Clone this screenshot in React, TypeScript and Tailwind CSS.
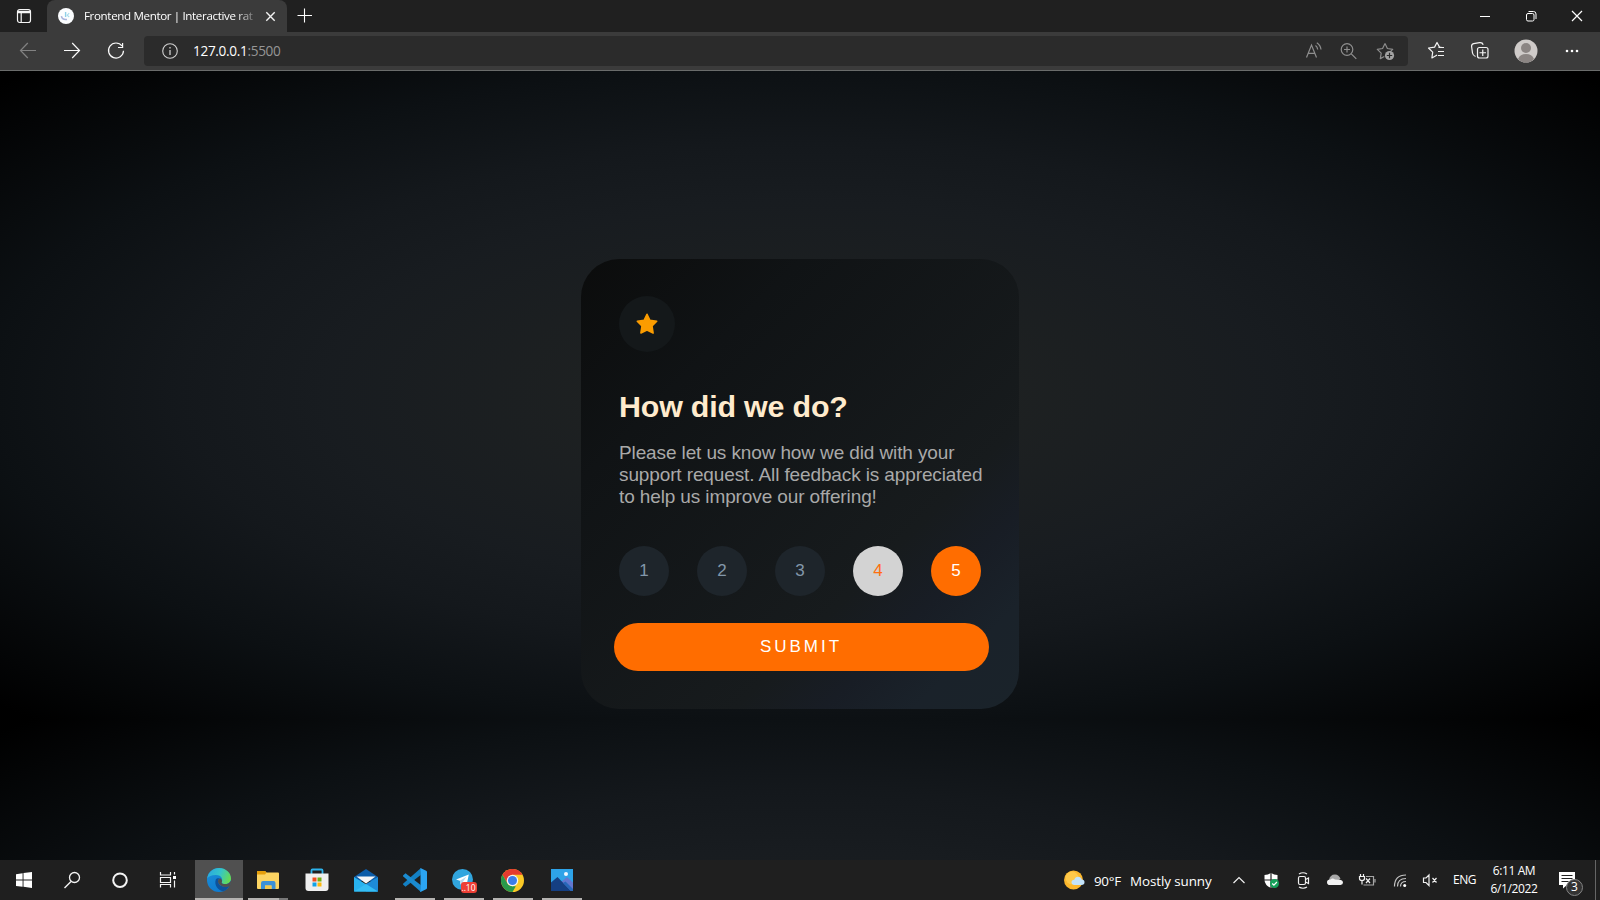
import React from "react";

const ui = "font-['Open_Sans','Noto_Sans',sans-serif]";

function TabBar() {
  return (
    <div className="flex h-8 shrink-0 bg-[#202020]">
      <div className="flex w-[47px] items-center justify-center">
        <svg width="16" height="16" viewBox="0 0 16 16" fill="none" stroke="#f5f5f5">
          <rect x="1.5" y="1.5" width="13" height="13" rx="2.2" strokeWidth="1.2" />
          <path d="M1.5 3.4h13M2 4.5h12" strokeWidth="1.4" />
          <path d="M5.2 4v10" strokeWidth="1.2" />
        </svg>
      </div>
      <div className="flex w-[240px] items-center rounded-t-lg bg-[#3b3b3b] pl-[11px]">
        <svg width="16" height="16" viewBox="0 0 16 16">
          <circle cx="8" cy="8" r="8" fill="#fbfdff" />
          <path d="M3.4 8.2c.5 2.6 2.8 3.6 5.6 3.2" fill="none" stroke="#a9b4dc" strokeWidth="1.5" />
          <path d="M7.6 4v5" stroke="#8fd0e8" strokeWidth="1.4" />
          <path d="M11.2 5.2 9.2 7.2l2 1.8" fill="none" stroke="#a5dcec" strokeWidth="1.1" />
        </svg>
        <div className="ml-[10px] w-[173px] text-[11.6px] leading-4 tracking-[-0.36px] whitespace-nowrap text-white [mask-image:linear-gradient(to_right,#000_152px,transparent_176px)]">
          Frontend Mentor | Interactive rat
        </div>
        <svg className="ml-[8px]" width="11" height="11" viewBox="0 0 11 11" stroke="#f2f2f2" strokeWidth="1.4">
          <path d="m1.3 1.3 8.4 8.4M9.7 1.3 1.3 9.7" />
        </svg>
      </div>
      <svg className="ml-[10px]" width="16" height="32" viewBox="0 0 16 32" stroke="#fff" strokeWidth="1.1">
        <path d="M.5 15.5h14.5M7.5 8.5v14" />
      </svg>
      <div className="ml-auto flex items-center text-white">
        <svg width="46" height="32" viewBox="0 0 46 32" stroke="#fff">
          <path d="M18 16.5h10" />
        </svg>
        <svg width="46" height="32" viewBox="0 0 46 32" stroke="#fff" fill="none">
          <rect x="18.500" y="13.500" width="7.500" height="7.500" rx="1.500" />
          <path d="M20.500 11.500h5q2.500 0 2.500 2.500v5" />
        </svg>
        <svg width="46" height="32" viewBox="0 0 46 32" stroke="#fff" strokeWidth="1.2">
          <path d="m18 11 10 10M28 11 18 21" />
        </svg>
      </div>
    </div>
  );
}

function Toolbar() {
  return (
    <div className="flex h-[39px] shrink-0 items-center border-b border-[#6a6c6b] bg-[#3b3b3b]">
      <svg width="144" height="38" viewBox="0 0 144 38" fill="none" strokeWidth="1.2">
        <path d="M36 18.500H20.500M27.800 11l-7.300 7.500 7.300 7.500" stroke="#828282" />
        <path d="M64 18.500h15.500M72.200 11l7.300 7.500-7.300 7.500" stroke="#fafafa" />
        <path d="M122 14a7.500 7.500 0 1 0 1.500 4.800M122.600 11v4.500H118" stroke="#fafafa" />
      </svg>
      <div className="flex h-[30px] w-[1264px] items-center rounded-[4px] bg-[#2b2b2b]">
        <svg className="ml-[18px]" width="16" height="16" viewBox="0 0 16 16" fill="none" stroke="#d0d0d0">
          <circle cx="8" cy="8" r="7.300" strokeWidth="1.100" />
          <path d="M8 7v5M8 4v1.600" strokeWidth="1.300" />
        </svg>
        <div className="ml-[15px] text-[13.6px] leading-4 tracking-[-0.32px] whitespace-nowrap text-white">
          127.0.0.1<span className="text-[#969696]">:5500</span>
        </div>
        <svg className="ml-auto" width="108" height="30" viewBox="0 0 108 30" fill="none" stroke="#8e8e8e" strokeWidth="1.200">
          <path d="M6.500 21.500 11.500 9l5 12.500M8.200 17.300h6.600" />
          <path d="M15.500 9.500q2 1.500 2.200 4M16.800 6.800q3.700 2.500 4.200 6.700" />
          <circle cx="47" cy="13.500" r="5.800" />
          <path d="m51.300 17.800 5 5M44 13.500h6M47 10.500v6" />
          <path d="m85 7.500 2.400 5 5.300.8-3.800 3.800M85 7.500l-2.400 5-5.300.8 3.900 3.900-.9 5.400 4-2.100" strokeLinejoin="round" />
          <circle cx="89.500" cy="19.500" r="4.600" fill="#a3a3a3" stroke="none" />
          <path d="M86.800 19.500h5.400M89.500 16.800v5.400" stroke="#2b2b2b" />
        </svg>
      </div>
      <svg width="192" height="38" viewBox="0 0 192 38" fill="none" stroke="#f4f4f4" strokeWidth="1.200">
        <g transform="translate(-.5 1)">
          <path d="m34.500 14.500-2.500-.4-2.500-4.600-2.400 4.600-6.100.9 4.200 4.200-.8 5.700 5.200-2.900" strokeLinejoin="round" />
          <path d="M31 14.500h5.500M30.500 18.500h6M30.500 22.500h6" />
        </g>
        <path d="M67.500 24.500q-2.500-.9-3-3.500l-.9-6.500q-.2-2.300 2-2.900l6-.9q2.800-.4 3.600 2" />
        <rect x="69.500" y="15.500" width="10.500" height="10.500" rx="2" />
        <path d="M74.750 17.500v6.500M71.500 20.750h6.500" />
        <g stroke="none">
          <circle cx="118" cy="19" r="11.500" fill="#cfcbc9" />
          <circle cx="118" cy="16" r="5" fill="#8b8583" />
          <path d="M110 27q2-5 8-5t8 5q-3.300 3.500-8 3.500t-8-3.500Z" fill="#8b8583" />
          <circle cx="159" cy="19" r="1.300" fill="#fff" />
          <circle cx="164" cy="19" r="1.300" fill="#fff" />
          <circle cx="169" cy="19" r="1.300" fill="#fff" />
        </g>
      </svg>
    </div>
  );
}

const ratings = [
  { n: 1, style: "bg-[#1e252b] text-[#8297aa]" },
  { n: 2, style: "bg-[#1e252b] text-[#8297aa]" },
  { n: 3, style: "bg-[#1e252b] text-[#8297aa]" },
  { n: 4, style: "bg-[#d3d3d3] text-[#ff6f0f]" },
  { n: 5, style: "bg-[#ff6d00] text-white" },
];

function RatingCard() {
  return (
    <main className="flex h-[450px] w-[438px] flex-col rounded-[38px] bg-[linear-gradient(135deg,#0b0c0c_0%,#101315_25%,#171b1d_68%,#181d25_78%,#1a222a_88%,#1a232a_100%)] pt-[37px] pl-[38px] font-['Liberation_Sans',Arial,sans-serif]">
      <div className="flex size-14 items-center justify-center rounded-full bg-[#14181a]">
        <svg width="22" height="22" viewBox="0 0 22 22" fill="#fb9c00" stroke="#fb9c00" strokeWidth="1.600" strokeLinejoin="round">
          <path d="m11 1.300 2.900 6.100 6.800.8-4.700 4.700 1.100 7.100L11 17l-6.100 3 1.100-7.100-4.700-4.700 6.800-.8Z" />
        </svg>
      </div>
      <h1 className="mt-[37px] text-[30.4px] leading-[35px] font-bold tracking-[-0.19px] text-[#ffebcd]">How did we do?</h1>
      <p className="mt-[18px] w-[380px] text-[19px] leading-[22px] tracking-[-0.12px] whitespace-nowrap text-[#a9a9a9]">
        Please let us know how we did with your
        <br />
        support request. All feedback is appreciated
        <br />
        to help us improve our offering!
      </p>
      <div className="mt-[38px] flex gap-7">
        {ratings.map((r) => (
          <button key={r.n} className={`flex size-[50px] items-center justify-center rounded-full pb-px text-[17px] ${r.style}`}>
            {r.n}
          </button>
        ))}
      </div>
      <button className="mt-[27px] -ml-[5px] h-12 w-[375px] rounded-full bg-[#ff6d00] pr-px text-[17px] tracking-[3px] text-white">
        SUBMIT
      </button>
    </main>
  );
}

function EdgeIcon() {
  return (
    <svg width="24" height="24" viewBox="0 0 24 24">
      <defs>
        <linearGradient id="edgeTop" x1="0" y1="0.300" x2="1" y2="0.600">
          <stop offset="0" stopColor="#2aa9df" />
          <stop offset=".5" stopColor="#35c5c9" />
          <stop offset="1" stopColor="#68dc4e" />
        </linearGradient>
        <linearGradient id="edgeSide" x1="0" y1="0" x2="0.500" y2="1">
          <stop offset="0" stopColor="#1b8fd8" />
          <stop offset="1" stopColor="#0f7bd0" />
        </linearGradient>
      </defs>
      <circle cx="12" cy="12" r="12" fill="url(#edgeSide)" />
      <path d="M.2 10.500C1 4.500 5.800 0 12 0c7 0 12 5 12 10.600 0 3.400-2.600 5.500-5.600 5.500-2.500 0-4.300-.9-3.600-2.100 1-1.800.6-7-6-7C4.600 7 1.500 8.500.2 10.500Z" fill="url(#edgeTop)" />
      <path d="M8.800 11.500C7 16.800 10.600 22 16.200 23.300c2.600-.9 5-2.900 6.300-5.500-4.500 2-9.600 1.300-11.300-3.200-.5-1.500.1-3.200 1.500-4.100-1.500-.4-3.200-.2-3.900 1Z" fill="#0d529c" />
      <path d="M14.800 14c-.7 1.200 1.100 2.100 3.600 2.100 2.300 0 4.300-1.200 5.200-3.200l.8 1.100-1.600 4.200c-4.500 1.600-9.900.9-11.600-3.600-.6-1.700.3-3.700 1.900-4.300 1.700.7 2.300 2.500 1.700 3.700Z" fill="#505050" />
    </svg>
  );
}

function ExplorerIcon() {
  return (
    <svg width="22" height="18" viewBox="0 0 22 18">
      <path d="M0 1q0-1 1-1h7l1.500 1.500H21q1 0 1 1V17q0 1-1 1H1q-1 0-1-1Z" fill="#fcd462" />
      <path d="M0 1q0-1 1-1h7l1.500 1.500-1.500 2H0Z" fill="#e59e0a" />
      <path d="M4 18v-6q0-2 2-2h10.500q2 0 2 2v6h-4v-3.500H8V18Z" fill="#3c91d8" />
      <path d="M8 14.500h6.500V18H8Z" fill="#f5c84d" />
    </svg>
  );
}

function StoreIcon() {
  return (
    <svg width="24" height="24" viewBox="0 0 24 24">
      <path d="M6.500 6V2.500q0-1 1-1h9q1 0 1 1V6" fill="none" stroke="#2db3ec" strokeWidth="1.800" />
      <path d="M.5 5.500h23V20q0 3-3 3h-17q-3 0-3-3Z" fill="#efefef" />
      <path d="M7.500 9.500H11.500v4h-4Z" fill="#f04e20" />
      <path d="M12.500 9.500H16.500v4h-4Z" fill="#72ad10" />
      <path d="M7.500 14.500H11.500v4h-4Z" fill="#10a2e8" />
      <path d="M12.500 14.500H16.500v4h-4Z" fill="#fdb80d" />
    </svg>
  );
}

function MailIcon() {
  return (
    <svg width="24" height="23" viewBox="0 0 24 23">
      <path d="M0 8 12 0l12 8v4H0Z" fill="#0c5ca8" />
      <path d="M0 8v14.500h24Z" fill="#28b2ef" />
      <path d="M24 8v14.500H12V15Z" fill="#1d8bd8" />
      <path d="M0 22.500 12 15l12 7.500Z" fill="#35bdf4" />
      <path d="M2.500 7.500h19L12 14.500Z" fill="#f6f6f6" />
    </svg>
  );
}

function CodeIcon() {
  return (
    <svg width="24" height="24" viewBox="0 0 24 24">
      <path d="m18 0-.3 7L2.500 18.700.3 16.800q-.6-.6 0-1.200Z" fill="#1380c4" />
      <path d="m18 24-.3-7L2.500 5.300.3 7.200q-.6.600 0 1.200Z" fill="#1b8bd0" />
      <path d="m17.500 0 5.600 2.700q.9.500.9 1.400v15.800q0 1-.9 1.400L17.500 24q-.8 0 0-1Z" fill="#2ba4f2" />
    </svg>
  );
}

function TelegramIcon() {
  return (
    <div className="relative size-6">
      <svg width="24" height="24" viewBox="0 0 24 24">
        <circle cx="10.500" cy="11.500" r="10.500" fill="#31a5de" />
        <path d="m4 11.500 12.800-5-2.300 11-4-2.900-2 2-.6-3.900Z" fill="#fff" />
        <path d="m7.900 12.700 6.400-4-3.800 5.900-2 2Z" fill="#b7d9ed" />
      </svg>
      <span className="absolute top-[14px] left-[9px] flex h-[11px] w-4 items-center justify-center rounded-[3px] bg-[#ee3f35] text-[8.500px] leading-[11px] text-white">..10</span>
    </div>
  );
}

function ChromeIcon() {
  return (
    <svg width="23" height="23" viewBox="0 0 24 24">
      <circle cx="12" cy="12" r="12" fill="#fbc926" />
      <path d="M1.600 6A12 12 0 0 1 22.400 6H12L6.800 15Z" fill="#e53b2f" />
      <path d="M1.600 6 6.800 15q2 3.200 5.400 3h3.300L12 24A12 12 0 0 1 1.600 6Z" fill="#28994b" />
      <circle cx="12" cy="12" r="6" fill="#f4f6f8" />
      <circle cx="12" cy="12" r="4.700" fill="#3c7de8" />
    </svg>
  );
}

function PhotosIcon() {
  return (
    <svg width="22" height="22" viewBox="0 0 22 22">
      <path d="M0 0h22v22H0Z" fill="#2ea3e8" />
      <path d="m9 14 7-6 6 5.500V22H9Z" fill="#6277cf" />
      <path d="M0 13.500 6.500 8 20 22H0Z" fill="#153f82" />
      <path d="m12 14 2.500-1.500L22 20v2h-2Z" fill="#2767b8" />
      <circle cx="15" cy="5" r="2" fill="#f3f8ff" />
    </svg>
  );
}

const apps = [
  { name: "edge", icon: <EdgeIcon />, cell: "w-12", bar: "w-12 bg-[#b5b3b1]", tile: "bg-[#505050]" },
  { name: "explorer", icon: <ExplorerIcon />, cell: "w-[49px]", bar: "w-10 bg-[linear-gradient(to_right,#b5b3b1_31px,#777_31px)]", tile: "" },
  { name: "store", icon: <StoreIcon />, cell: "w-[49px]", bar: "", tile: "" },
  { name: "mail", icon: <MailIcon />, cell: "w-[49px]", bar: "", tile: "" },
  { name: "code", icon: <CodeIcon />, cell: "w-[49px]", bar: "w-10 bg-[#b5b3b1]", tile: "" },
  { name: "telegram", icon: <TelegramIcon />, cell: "w-[49px]", bar: "w-10 bg-[#b5b3b1]", tile: "" },
  { name: "chrome", icon: <ChromeIcon />, cell: "w-[49px]", bar: "w-10 bg-[#b5b3b1]", tile: "" },
  { name: "photos", icon: <PhotosIcon />, cell: "w-[49px]", bar: "w-10 bg-[#b5b3b1]", tile: "" },
];

function Tray() {
  return (
    <div className="ml-auto flex h-10 items-center text-white">
      <svg width="21" height="20" viewBox="0 0 21 20">
        <circle cx="9.500" cy="10" r="9.500" fill="#fcb72c" />
        <circle cx="8" cy="8" r="6.500" fill="#ffc94a" />
        <path d="M10.500 15q-3-.2-3-2.700 0-2.200 2.800-2.500.8-3 3.800-3 2.800 0 3.600 2.800 2.800.2 2.800 2.600 0 2.600-3 2.800Z" fill="#c3e3fa" />
      </svg>
      <div className="ml-[9px] w-[27px] pt-px text-[13.400px] leading-4 tracking-[-0.300px] whitespace-nowrap">90°F</div>
      <div className="ml-[9px] w-[85px] pt-px text-[13.400px] leading-4 tracking-[-0.080px] whitespace-nowrap">Mostly sunny</div>
      <svg width="236" height="40" viewBox="1215 0 236 40" fill="none" stroke="#f0f0f0" strokeWidth="1.200">
        <path d="m1233.500 23 5.500-5.500 5.500 5.500" />
        <path d="M1271 13q3 1.800 6.500 2v5q0 5-6.500 8-6.500-3-6.500-8v-5q3.500-.2 6.500-2Z" fill="#fff" stroke="none" />
        <path d="M1271 13v15M1264 20h14" stroke="#222" strokeWidth="1.200" />
        <circle cx="1274.500" cy="23.500" r="4.500" fill="#16a05a" stroke="none" />
        <path d="m1272.200 23.500 1.700 1.700 3-3.200" stroke="#fff" />
        <rect x="1298.500" y="16.500" width="7" height="8" rx="1.500" />
        <path d="m1305.500 19.500 3-1.500v5.500l-3-1.500M1299 14q4-2.500 8 0M1299 27q4 2.500 8 0" />
        <g stroke="none">
          <path d="M1329 20q1-5.500 6-5.500 4 0 5.500 4.500l-9 5Z" fill="#a9a9a9" />
          <path d="M1330 25q-3 0-3-2.800t3.500-2.700q2-2 4.500 0l6 .5q2 .5 2 2.500t-2.500 2.500Z" fill="#f2f2f2" />
        </g>
        <path d="M1366 16.500h7.500v8.500h-10M1375 19v3.500" stroke="#a5a5a5" />
        <path d="M1360.500 14v2.500M1363.500 14v2.500M1359.500 16.500h5v2q0 2-2.500 2t-2.500-2ZM1362 20.500v4M1366 18.500l4 4.500M1370 18.500l-4 4.500" />
        <path d="M1394.500 26.500q0-11.500 11.500-11.500M1397.500 26.500q0-8 8.500-8M1400.500 26.500q0-5 5.500-5" stroke="#c5c5c5" />
        <circle cx="1404.700" cy="25.500" r="1.500" fill="#fff" stroke="none" />
        <path d="M1423.500 18h2.500l3-3v10.500l-3-3h-2.500ZM1432.500 18l4 4.500M1436.500 18l-4 4.500" />
      </svg>
      <div className="ml-[2px] w-[34px] text-[12px] leading-4 tracking-[-0.500px]">ENG</div>
      <div className="-ml-px flex w-14 flex-col items-center text-[12px] leading-[18px] tracking-[-0.380px] whitespace-nowrap">
        <span>6:11 AM</span>
        <span>6/1/2022</span>
      </div>
      <div className="relative ml-[17px] h-10 w-[36px]">
        <svg width="36" height="40" viewBox="0 0 36 40">
          <path d="M0 12h16v13h-8l-4 3.500V25H0Z" fill="#fff" />
          <path d="M2.500 15.500h11M2.500 18.500h11M2.500 21.500h7" stroke="#222" />
          <circle cx="15.500" cy="27.500" r="8" fill="#333" stroke="#858585" />
        </svg>
        <span className="absolute top-[19px] left-[12px] text-[12px] leading-4">3</span>
      </div>
      <div className="h-10 w-[5px] border-l border-[#666]" />
    </div>
  );
}

function Taskbar() {
  return (
    <div className="flex h-10 shrink-0 bg-[#1f1f1f]">
      <svg width="195" height="40" viewBox="0 0 195 40" fill="none" stroke="#f4f4f4">
        <g fill="#fff" stroke="none">
          <path d="m16 14.300 6.600-1v6.300H16ZM23.500 13.100 32 12v7.600h-8.500ZM16 20.500h6.600v6.300l-6.600-.9ZM23.500 20.500H32V28l-8.500-1.200Z" />
        </g>
        <circle cx="74.500" cy="17.500" r="5" strokeWidth="1.300" />
        <path d="m71 21.500-6.500 6.500" strokeWidth="1.400" />
        <circle cx="120" cy="20.200" r="6.800" strokeWidth="2" />
        <path d="M160.500 12v3h10V12M160.500 27.500v-3h10v3M160.500 17.500h10v5h-10ZM174.500 12v2.500M174.500 20.500v7" strokeWidth="1.200" />
        <path d="M173 16h3v3h-3Z" fill="#fff" stroke="none" />
      </svg>
      {apps.map((app) => (
        <div key={app.name} className={`flex h-10 flex-col items-center justify-between ${app.cell} ${app.tile}`}>
          <div className="flex h-[38px] items-center pt-[2px]">{app.icon}</div>
          <div className={`h-[2px] ${app.bar}`} />
        </div>
      ))}
      <Tray />
    </div>
  );
}

export default function App() {
  return (
    <div className={`flex h-[900px] w-[1600px] flex-col overflow-hidden ${ui}`}>
      <TabBar />
      <Toolbar />
      <div className="flex flex-1 justify-center bg-[radial-gradient(#202221_0%,#1f2222_12%,#181c20_42%,#14181c_55%,#0c1013_72%,#000000_98%)] bg-[length:100%_648px] pt-[188px]">
        <RatingCard />
      </div>
      <Taskbar />
    </div>
  );
}
